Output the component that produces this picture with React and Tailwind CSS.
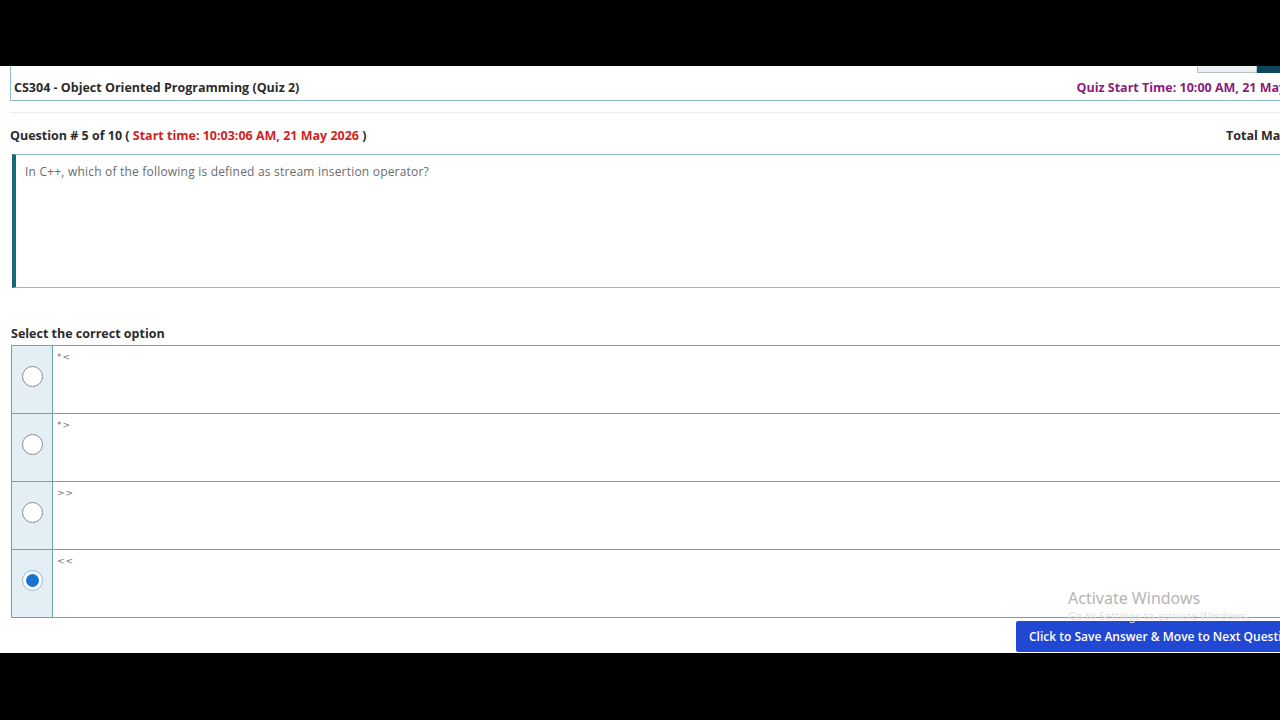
import React, { useState } from 'react';

// Quiz page: header strip, question card, option table and the save button.
const OPTIONS = ['*<', '*>', '>>', '<<'];

const FONT = { fontFamily: '"Open Sans", "Noto Sans", Arial, sans-serif' };

export default function App() {
  const [picked, setPicked] = useState(3);

  return (
    <div className="w-[1280px] h-[720px] overflow-hidden bg-black flex flex-col" style={FONT}>
      <div className="h-[66px] shrink-0" />

      <div className="relative h-[587px] shrink-0 bg-white overflow-hidden">
        <div className="w-[1340px] pl-[10px]">
          {/* course header */}
          <div className="relative h-[35px] border-l border-b border-[#8fbcc4] flex items-center justify-between pl-[3px] pr-[22px] pt-[11px]">
            <span className="text-[12.5px] font-bold text-[#2b2b2b]">CS304 - Object Oriented Programming (Quiz 2)</span>
            <span className="text-[12.5px] font-bold text-[#8a1c7c]">Quiz Start Time: 10:00 AM, 21 May 2026</span>
            <div className="absolute top-0 left-[1186px] flex">
              <div className="w-[60px] h-[7px] bg-[#eef1f2] border border-t-0 border-[#b9c4c8]" />
              <div className="w-[30px] h-[7px] bg-[#0e4759]" />
            </div>
          </div>
          <div className="h-[11px]" />
          <div className="h-px bg-[#eeeeee] mr-[10px]" />

          {/* question line */}
          <div className="h-[41px] flex items-center justify-between pr-[26px] pt-[5px]">
            <span className="text-[12.5px] font-bold text-[#2b2b2b]">
              Question # 5 of 10 ( <span className="text-[#d21f1f]">Start time: 10:03:06 AM, 21 May 2026</span> )
            </span>
            <span className="text-[12.5px] font-bold text-[#2b2b2b]">Total Marks: 1</span>
          </div>

          <div className="ml-[2px] h-[134px] border border-l-4 border-[#8fbcc4] border-l-[#17697a] pl-[9px] pt-[8px]">
            <p className="text-[12px] tracking-[0.2px] text-[#6b6b6b]">In C++, which of the following is defined as stream insertion operator?</p>
          </div>

          <div className="h-[37px]" />
          <div className="text-[12.5px] font-bold text-[#2b2b2b] pl-px h-[20px] leading-[18px]">Select the correct option</div>

          {/* options */}
          <div className="ml-px border-t border-l border-[#68a6b1]">
            {OPTIONS.map((opt, i) => (
              <div key={i} className="flex h-[68px] border-b border-[#68a6b1]">
                <label className="w-[41px] shrink-0 bg-[#e4eff5] border-r border-[#68a6b1] flex items-start justify-center pt-[20px] cursor-pointer">
                  <span
                    onClick={() => setPicked(i)}
                    className={`w-[21px] h-[21px] rounded-full flex items-center justify-center bg-white border ${picked === i ? 'border-[#8fb6d6]' : 'border-[#8a8a8a]'}`}
                  >
                    {picked === i && <span className="w-[13px] h-[13px] rounded-full bg-[#1a73d1]" />}
                  </span>
                </label>
                <div className="pl-[4px] pt-[5px] text-[9px] text-[#777] tracking-[1px]" style={{ fontFamily: '"DejaVu Sans", sans-serif' }}>{opt}</div>
              </div>
            ))}
          </div>

          <div className="flex justify-start pl-[1006px] pt-[3px]">
            <button className="h-[31px] px-[13px] rounded-[2px] bg-[#2148d2] text-white text-[12px] font-semibold whitespace-nowrap">
              Click to Save Answer &amp; Move to Next Question
            </button>
          </div>
        </div>

        {/* windows watermark */}
        <div className="absolute left-[1068px] top-[520px] pointer-events-none">
          <div className="text-[16px] text-[#b5b5b5]" style={{ fontFamily: '"Noto Sans", sans-serif' }}>Activate Windows</div>
          <div className="text-[11px] text-[#e2e2e2] -mt-[2px]" style={{ fontFamily: '"Noto Sans", sans-serif' }}>Go to Settings to activate Windows.</div>
        </div>
      </div>

      <div className="flex-1" />
    </div>
  );
}
